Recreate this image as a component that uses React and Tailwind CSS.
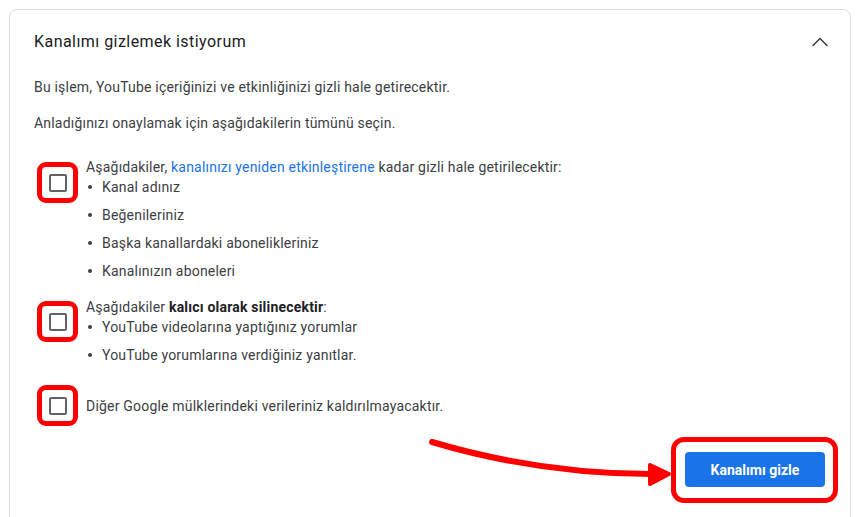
import React from 'react'

// Kutu içindeki boş onay kutusu (kırmızı işaretli)
function MarkedCheckbox() {
  return (
    <div className="w-[41px] h-[41px] shrink-0 border-[5px] border-[#ff0000] rounded-[9px] flex items-center justify-center">
      <div className="w-[18px] h-[18px] border-2 border-[#5f6368] rounded-[2px]" />
    </div>
  )
}

function Bullets({ items }) {
  return (
    <ul className="flex flex-col gap-[8px]">
      {items.map(t => (
        <li key={t} className="flex items-center h-[20px]">
          <span className="w-[4px] h-[4px] rounded-full bg-[#3c4043] ml-[2px] mr-[10px]" />
          {t}
        </li>
      ))}
    </ul>
  )
}

export default function App() {
  return (
    <div
      className="relative w-[857px] h-[517px] overflow-hidden bg-white text-[14px] leading-[20px] tracking-[0.2px] text-[#3c4043]"
      style={{ fontFamily: 'Roboto, "Liberation Sans", Arial, sans-serif' }}
    >
      <div className="ml-[9px] mt-[9px] w-[842px] border border-[#dadce0] rounded-[8px] pb-[40px]">
        {/* Encabezado */}
        <div className="h-[64px] flex items-center justify-between pl-[24px] pr-[18px]">
          <h2 className="text-[16px] tracking-[0.45px] text-[#202124]">Kanalımı gizlemek istiyorum</h2>
          <svg width="24" height="24" viewBox="0 0 24 24" fill="none" stroke="#3c4043" strokeWidth="1.6" strokeLinecap="round" strokeLinejoin="round">
            <polyline points="5,15.5 12,8.5 19,15.5" />
          </svg>
        </div>

        <div className="px-[24px] pt-[3px]">
          <p>Bu işlem, YouTube içeriğinizi ve etkinliğinizi gizli hale getirecektir.</p>
          <p className="mt-[16px]">Anladığınızı onaylamak için aşağıdakilerin tümünü seçin.</p>

          <div className="mt-[24px] flex items-start">
            <div className="ml-[3px] mt-[5px]">
              <MarkedCheckbox />
            </div>
            <div className="ml-[8px]">
              <p>
                Aşağıdakiler, <span className="text-[#1a73e8]">kanalınızı yeniden etkinleştirene</span> kadar gizli hale getirilecektir:
              </p>
              <Bullets items={['Kanal adınız', 'Beğenileriniz', 'Başka kanallardaki abonelikleriniz', 'Kanalınızın aboneleri']} />
            </div>
          </div>

          <div className="mt-[16px] flex items-start">
            <div className="ml-[3px] mt-[4px]">
              <MarkedCheckbox />
            </div>
            <div className="ml-[8px]">
              <p>
                Aşağıdakiler <span className="font-bold text-[#202124]">kalıcı olarak silinecektir</span>:
              </p>
              <Bullets items={['YouTube videolarına yaptığınız yorumlar', 'YouTube yorumlarına verdiğiniz yanıtlar.']} />
            </div>
          </div>

          <div className="mt-[20px] flex items-center">
            <div className="ml-[3px]">
              <MarkedCheckbox />
            </div>
            <p className="ml-[8px]">Diğer Google mülklerindeki verileriniz kaldırılmayacaktır.</p>
          </div>
        </div>

        {/* Botón */}
        <div className="mt-[11px] flex justify-end pr-[12px]">
          <div className="border-[5px] border-[#ff0000] rounded-[13px] pl-[9px] pr-[8px] pt-[10px] pb-[11px]">
            <button className="w-[140px] h-[35px] rounded-[4px] bg-[#1a73e8] text-white font-bold text-[14px] tracking-normal">
              Kanalımı gizle
            </button>
          </div>
        </div>
      </div>

      {/* Flecha roja */}
      <svg className="absolute left-0 top-0 pointer-events-none" width="857" height="517" viewBox="0 0 857 517">
        <path d="M432 442 Q540 474 652 474" fill="none" stroke="#ff0000" strokeWidth="6" strokeLinecap="round" />
        <polygon points="650,465 669,474 650,484" fill="#ff0000" stroke="#ff0000" strokeWidth="4" strokeLinejoin="round" />
      </svg>
    </div>
  )
}
